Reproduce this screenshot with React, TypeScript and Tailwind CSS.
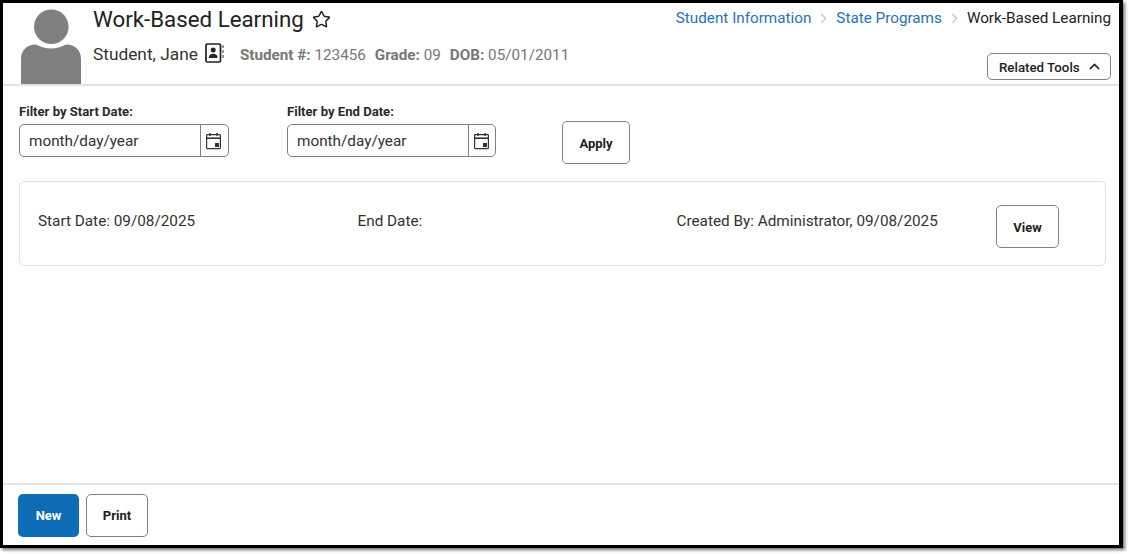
import React from "react";
import { ChevronRight, ChevronUp, Star } from "lucide-react";

function CalendarIcon() {
  return (
    <svg width="17" height="18" viewBox="0 0 17 18" fill="none" stroke="#333" strokeWidth="1.2">
      <rect x="1.6" y="2.6" width="13.8" height="14" rx="0.8" />
      <path d="M1.6 6.2h13.8" strokeWidth="1.6" />
      <path d="M5 1v3M12 1v3" strokeWidth="1.4" />
      <rect x="10" y="11" width="4" height="4" fill="#333" stroke="none" />
    </svg>
  );
}

function ContactIcon() {
  return (
    <svg width="19" height="20" viewBox="0 0 19 20" fill="none">
      <rect x="1" y="1" width="14.5" height="18" rx="1.2" stroke="#222" strokeWidth="1.7" />
      <circle cx="8.2" cy="7" r="2.5" fill="#222" />
      <path d="M3.8 15c0-3 2-4.200 4.400-4.200s4.400 1.200 4.400 4.200z" fill="#222" />
      <path d="M18 2v3M18 7v3M18 12v3" stroke="#444" strokeWidth="1.1" />
    </svg>
  );
}

function Avatar() {
  return (
    <svg width="60" height="75" viewBox="0 0 60 75" fill="#808080" className="block">
      <circle cx="30.300" cy="17.800" r="17.300" />
      <path d="M0 75V50C0 41 6 35.500 15 35.500C20 38 25 39.500 30 39.500C35 39.500 40 38 45 35.500C54 35.500 60 41 60 50V75Z" />
    </svg>
  );
}

function DateField({ label, width, cal }: { label: string; width: string; cal: string }) {
  return (
    <div className={width}>
      <div className="text-[13.100px] leading-[14px] font-bold text-[#2b2b2b] mb-[5px]">{label}</div>
      <div className="flex h-[33px] rounded-[5px] border border-[#808080] bg-white">
        <div className="flex-1 pl-[9px] text-[15.300px] leading-[33px] text-[#333]">month/day/year</div>
        <div className={`${cal} border-l border-[#808080] flex items-center justify-center pr-[2px]`}>
          <CalendarIcon />
        </div>
      </div>
    </div>
  );
}

function Btn({ children, className }: { children: React.ReactNode; className: string }) {
  return (
    <button className={`rounded-[5px] border border-[#808080] bg-white text-[13px] font-bold text-[#222] ${className}`}>
      {children}
    </button>
  );
}

export default function App() {
  return (
    <div className="w-[1129px] h-[554px] bg-white overflow-hidden font-['Roboto',sans-serif]">
      <div className="w-[1123px] h-[548px] border-[3px] border-r-4 border-black shadow-[2px_2px_3px_#777] flex flex-col bg-white">
        <header className="h-[83px] shrink-0 flex border-b-2 border-[#e2e2e2] pl-[18px] pr-[8px]">
          <div className="w-[60px] mt-[6px] shrink-0">
            <Avatar />
          </div>
          <div className="ml-[12px] flex-1">
            <div className="flex items-center h-[33px]">
              <h1 className="text-[22.300px] leading-[33px] font-normal text-[#222]">Work-Based Learning</h1>
              <Star className="ml-[8px] text-[#222]" size={19} strokeWidth={1.8} />
            </div>
            <div className="flex items-center mt-[2px] h-[34px]">
              <span className="text-[17.300px] text-[#333]">Student, Jane</span>
              <span className="ml-[7px] mt-[-4px]"><ContactIcon /></span>
              <div className="ml-[16px] text-[15.250px] text-[#777] flex gap-[9px]">
                <span><b className="font-bold">Student #:</b> 123456</span>
                <span><b className="font-bold">Grade:</b> 09</span>
                <span><b className="font-bold">DOB:</b> 05/01/2011</span>
              </div>
            </div>
          </div>
          <div className="flex flex-col items-end">
            <nav className="flex items-center h-[31px] text-[15.250px] text-[#1e73be]">
              <span>Student Information</span>
              <ChevronRight className="mx-[4px] text-[#c4c4c4]" size={17} strokeWidth={1.6} />
              <span>State Programs</span>
              <ChevronRight className="mx-[4px] text-[#c4c4c4]" size={17} strokeWidth={1.6} />
              <span className="text-[#222]">Work-Based Learning</span>
            </nav>
            <button className="mt-[19px] w-[124px] h-[27px] pl-[11px] rounded-[5px] border border-[#808080] bg-white text-[13.300px] font-medium text-[#222] flex items-center gap-[6px]">
              <span className="mt-[2px]">Related Tools</span>
              <ChevronUp size={17} strokeWidth={2} />
            </button>
          </div>
        </header>

        <main className="flex-1 pl-[16px] pr-[13px]">
          <div className="flex items-start pt-[19px]">
            <DateField label="Filter by Start Date:" width="w-[210px]" cal="w-[28px]" />
            <div className="ml-[58px]">
              <DateField label="Filter by End Date:" width="w-[209px]" cal="w-[27px]" />
            </div>
            <Btn className="ml-[66px] mt-[16px] w-[68px] h-[43px] pt-[2px]">Apply</Btn>
          </div>
          <section className="mt-[17px] h-[85px] rounded-[5px] border border-[#e2e2e2] flex items-start pl-[18px]">
            <div className="w-[319.500px] mt-[29px] leading-[20px] text-[15.300px] text-[#333]">Start Date: 09/08/2025</div>
            <div className="w-[319px] mt-[29px] leading-[20px] text-[15.300px] text-[#333]">End Date:</div>
            <div className="w-[319.500px] mt-[29px] leading-[20px] text-[15.300px] text-[#333]">Created By: Administrator, 09/08/2025</div>
            <Btn className="mt-[23px] w-[63px] h-[43px] pt-[2px]">View</Btn>
          </section>
        </main>

        <footer className="h-[62px] shrink-0 border-t-2 border-[#e2e2e2] flex items-start gap-[7px] pl-[15px] pt-[9px]">
          <button className="w-[61px] h-[43px] rounded-[5px] bg-[#0f6cb6] text-white text-[13px] font-bold">New</button>
          <Btn className="w-[62px] h-[43px]">Print</Btn>
        </footer>
      </div>
    </div>
  );
}
